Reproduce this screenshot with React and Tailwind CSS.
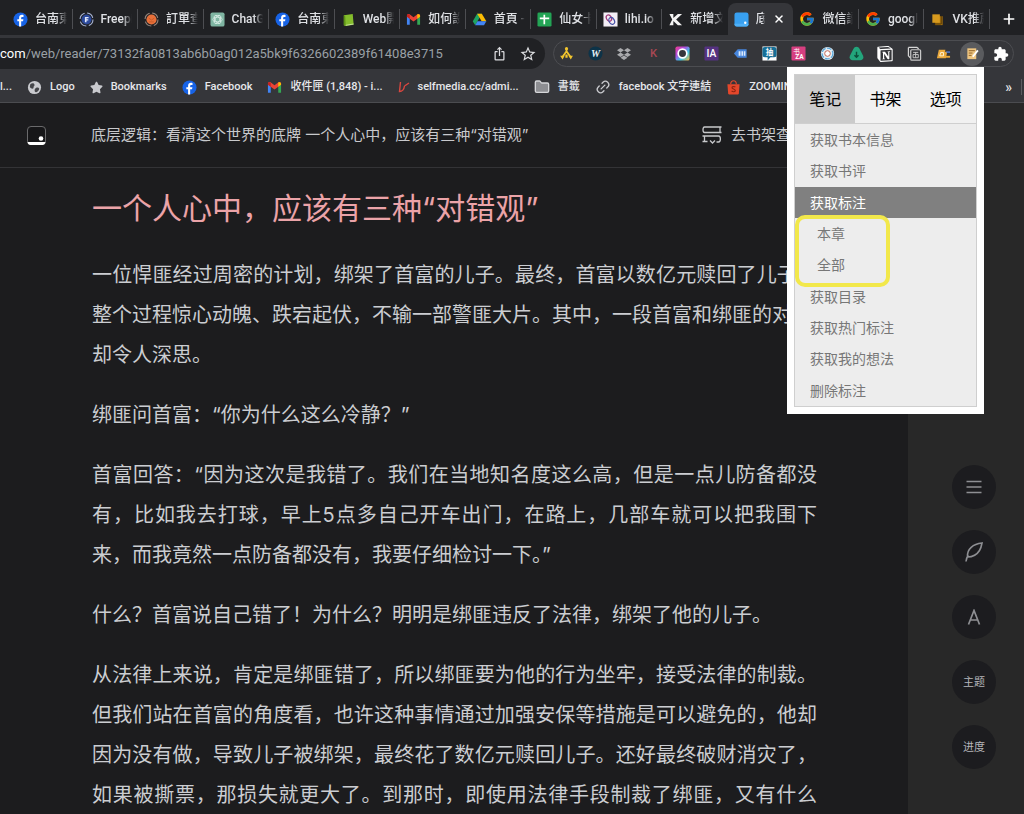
import React from "react";
import { FcGoogle } from "react-icons/fc";
import { FaDropbox, FaStar } from "react-icons/fa";
import { MdExtension, MdStarBorder, MdIosShare } from "react-icons/md";
import { SiNotion } from "react-icons/si";
import { Plus, X, Folder, Link2 } from "lucide-react";

const UI_FONT = "font-[Roboto,'Noto_Sans_CJK_TC',sans-serif]";
const READ_FONT = "font-[Inter,'Noto_Sans_CJK_SC',sans-serif]";

const Svg = ({ children, className = "size-[15px]", box = "0 0 16 16" }) => (
  <svg viewBox={box} className={`${className} shrink-0`} fill="none" aria-hidden="true">
    {children}
  </svg>
);

const Facebook = () => (
  <Svg>
    <circle cx="8" cy="8" r="7.500" fill="#1763e6" />
    <path d="M8.700 15.500V9.900h2l.4-2.200H8.700V6.400c0-.7.4-1.200 1.300-1.200h1.200V3.200c-.4-.1-1-.2-1.600-.2-1.900 0-3.100 1.100-3.100 3.100v1.600H4.600v2.200h1.900v5.600z" fill="#fff" />
  </Svg>
);
const Ring = ({ fill, ring, children }) => (
  <Svg>
    <circle cx="8" cy="8" r="5.400" fill={fill} />
    <circle cx="8" cy="8" r="6.900" stroke={ring} strokeWidth="1.100" strokeDasharray="8 2.800" />
    {children}
  </Svg>
);
const Freepik = () => (
  <Ring fill="#2c4a9c" ring="#aebbdc">
    <path d="M6.300 11V5.200h3.900v1.500H8v1h1.900v1.400H8V11z" fill="#dfe6fa" />
  </Ring>
);
const Orders = () => (
  <Ring fill="#e8703a" ring="#9c8a80">
    <path d="M5 6.500l3 2 3-2M5.500 10.500h5" stroke="#c85a28" />
  </Ring>
);
const ChatGPT = () => (
  <Svg>
    <rect x=".5" y=".5" width="15" height="15" rx="2" fill="#7fb5a2" />
    <g stroke="#d9ede6" strokeWidth=".9">
      <ellipse cx="8" cy="8" rx="5" ry="2.500" />
      <ellipse cx="8" cy="8" rx="5" ry="2.500" transform="rotate(60 8 8)" />
      <ellipse cx="8" cy="8" rx="5" ry="2.500" transform="rotate(120 8 8)" />
    </g>
  </Svg>
);
const GreenBook = () => (
  <Svg>
    <path d="M3 3.500L12.500 2l1 11.500L5 15l-2-1z" fill="#84bd2c" />
    <path d="M3 3.500l1.500 1L5 15l-2-1z" fill="#5d9116" />
    <path d="M5 14.200l8.500-1.400" stroke="#e6f3cf" strokeWidth=".7" />
  </Svg>
);
const Gmail = () => (
  <Svg>
    <path d="M1 13.500V4.500l3 2.300v6.700z" fill="#4285f4" />
    <path d="M12 13.500V6.800l3-2.300v9z" fill="#34a853" />
    <path d="M1 5V3.800C1 2.300 2.700 1.700 3.800 2.500L8 5.700l4.200-3.200C13.300 1.700 15 2.300 15 3.800V5L8 10.200z" fill="#ea4335" />
    <path d="M12 7.200V2.700c1.500-1 3 0 3 1.200V5z" fill="#fbbc04" />
    <path d="M1 3.900c0-1.200 1.500-2.200 3-1.200v4.500L1 5z" fill="#c5221f" />
  </Svg>
);
const Drive = () => (
  <Svg>
    <path d="M5.500 1.800h5L8 6.100 3.400 14 .8 9.800z" fill="#1ea362" />
    <path d="M5.500 1.800h5l4.800 8H10.300z" fill="#fbbc04" />
    <path d="M5.800 9.800h9.500L12.800 14H3.400z" fill="#4285f4" />
  </Svg>
);
const Sheets = () => (
  <Svg>
    <rect x=".5" y=".5" width="15" height="15" rx="1.500" fill="#23a455" />
    <path d="M3 6.700h10M7.800 3v10" stroke="#fff" strokeWidth="1.800" />
  </Svg>
);
const Lihi = () => (
  <Svg>
    <rect x=".5" y=".5" width="15" height="15" fill="#f3eef6" />
    <ellipse cx="6.300" cy="6.500" rx="2.600" ry="3.600" transform="rotate(-30 6.300 6.500)" stroke="#a03a78" strokeWidth="1.300" />
    <ellipse cx="9.300" cy="9.500" rx="2.800" ry="3.800" transform="rotate(-30 9.300 9.500)" stroke="#4652a8" strokeWidth="1.300" />
  </Svg>
);
const KShape = () => (
  <Svg>
    <path d="M1.500 2h4.200v4.500L10.500 2H15L8.700 8l6.300 6h-4.500L5.700 9.500V14H1.500l3-6z" fill="#f4f4f4" />
  </Svg>
);
const WeRead = () => (
  <Svg>
    <rect x=".5" y=".5" width="15" height="15" rx="2.500" fill="#38a0f0" />
    <path d="M.5 12.500h15v.5a2.500 2.500 0 0 1-2.500 2.500H3A2.500 2.500 0 0 1 .5 13z" fill="#4fb0f6" />
    <circle cx="12" cy="11.500" r="1.300" fill="#fff" />
  </Svg>
);
const Stack = () => (
  <Svg>
    <path d="M5.500 4.500h8v9.500h-8z" fill="#a36f0c" />
    <path d="M2.500 2.500h8v9h-8z" fill="#d79a1e" />
    <path d="M4 12.800h8V4" stroke="#402c05" strokeWidth=".8" />
  </Svg>
);
const Google = () => <FcGoogle className="size-4 shrink-0" />;

const TABS = [
  { title: "台南東區", Icon: Facebook },
  { title: "Freepik", Icon: Freepik },
  { title: "訂單查詢", Icon: Orders },
  { title: "ChatGPT", Icon: ChatGPT },
  { title: "台南東區", Icon: Facebook },
  { title: "Web開發", Icon: GreenBook },
  { title: "如何設定", Icon: Gmail },
  { title: "首頁 - 雲端", Icon: Drive },
  { title: "仙女卡片", Icon: Sheets },
  { title: "lihi.io", Icon: Lihi },
  { title: "新增文章", Icon: KShape },
  { title: "底层逻辑", Icon: WeRead, active: true },
  { title: "微信讀書", Icon: Google },
  { title: "google", Icon: Google },
  { title: "VK推薦", Icon: Stack },
];

function TabStrip() {
  return (
    <div className="flex h-[35px] shrink-0 items-end bg-[#202124] pl-[7px]">
      <div role="tablist" className="grid min-w-0 flex-1 auto-cols-fr grid-flow-col">
        {TABS.map(({ title, Icon, active }, i) => (
          <div
            key={i}
            className={
              active
                ? "flex h-8 min-w-0 items-center gap-2 rounded-t-lg bg-[#35363a] pl-[6px] pr-2"
                : "flex h-8 min-w-0 items-center"
            }
          >
            <button
              type="button"
              role="tab"
              aria-selected={!!active}
              className={
                active
                  ? "flex min-w-0 flex-1 items-center gap-[7px]"
                  : "flex h-5 min-w-0 flex-1 items-center gap-[7px] pl-[6px] pr-[5px]"
              }
            >
              <Icon />
              <span className="min-w-0 flex-1 overflow-hidden whitespace-nowrap text-left text-xs font-medium text-[#dfe1e5] [mask-image:linear-gradient(to_right,#000_70%,transparent)]">
                {title}
              </span>
            </button>
            {active ? (
              <button type="button" aria-label="關閉分頁" className="text-white">
                <X className="size-3" strokeWidth={3} />
              </button>
            ) : (
              <span className={i === 10 ? "" : "h-5 w-px bg-[#4d4e52]"} />
            )}
          </div>
        ))}
      </div>
      <button type="button" aria-label="新增分頁" className="grid h-8 w-[34px] place-items-center pl-1 text-white">
        <Plus className="size-4" strokeWidth={2.5} />
      </button>
    </div>
  );
}

const Tile = ({ bg, color = "#fff", children, size = 9 }) => (
  <Svg>
    <rect x=".5" y=".5" width="15" height="15" rx="1" fill={bg} />
    <text x="8" y="12" fontSize={size} fill={color} textAnchor="middle" fontWeight="500" fontFamily="Roboto, Noto Sans CJK TC">
      {children}
    </text>
  </Svg>
);

const EXTENSIONS = [
  ["分流", <Svg><path d="M8 3v3.500M8 5.500L3.800 11.500M8 5.500l4.200 6" stroke="#f2c52e" strokeWidth="1.900" /><circle cx="8" cy="2.800" r="1.700" fill="#f2c52e" /><path d="M1.200 10.500h4.800l-2.200 4zM10 10.500h4.800l-2.200 4zM6.800 9h2.400v3.500H6.800z" fill="#f2c52e" /></Svg>],
  ["Wordtune", <Svg><circle cx="8" cy="8" r="7.500" fill="#0d3348" /><text x="8" y="12" fontSize="11" fontStyle="italic" fontWeight="700" textAnchor="middle" fill="#e8f1f5" fontFamily="Liberation Serif">W</text></Svg>],
  ["Dropbox", <FaDropbox className="size-[14px] text-[#a9aaad]" />],
  ["Keywords", <Svg><text x="8" y="12" fontSize="12" fontWeight="500" textAnchor="middle" fill="#a84854" fontFamily="Roboto">K</text></Svg>],
  ["Screen", <Svg><defs><linearGradient id="cam" x1="0" y1="0" x2="1" y2="1"><stop stopColor="#f03a8c" /><stop offset=".35" stopColor="#b04be0" /><stop offset=".65" stopColor="#39c7e8" /><stop offset="1" stopColor="#f5b53c" /></linearGradient></defs><rect x=".5" y=".5" width="15" height="15" rx="2" fill="url(#cam)" /><circle cx="8" cy="8" r="4.600" stroke="#fff" strokeWidth="1.800" fill="#34353c" /></Svg>],
  ["IA", <Tile bg="#553280" size={11}>IA</Tile>],
  ["Reader", <Svg><path d="M1 8l4-4.500h9.500v9H5z" fill="#4786dc" /><path d="M6 5.500h2v5H6zM9 5.500h1.800v5H9zM11.600 5.500h1.600v5h-1.600z" fill="#dceafc" /></Svg>],
  ["抽獎", <Svg><rect x=".5" y=".5" width="15" height="15" fill="#fff" /><path d="M3 1h10a2.500 2.500 0 0 1 2.500 2.500v6A2.500 2.500 0 0 1 13 12H9l-3 3.500V12H3A2.500 2.500 0 0 1 .5 9.500v-6A2.500 2.500 0 0 1 3 1z" fill="#176f97" /><text x="8" y="9.800" fontSize="8" textAnchor="middle" fill="#fff" fontWeight="700" fontFamily="Noto Sans CJK TC">抽</text></Svg>],
  ["翻譯", <Svg><rect x=".5" y=".5" width="15" height="15" rx="1" fill="#d73f80" /><text x="6" y="8" fontSize="7" textAnchor="middle" fill="#fff" fontFamily="Noto Sans CJK TC">书</text><text x="9" y="14" fontSize="7" textAnchor="middle" fill="#fff" fontWeight="700" fontFamily="Roboto">ZA</text></Svg>],
  ["Sync", <Svg><circle cx="8" cy="8" r="7" fill="#e6eef3" /><circle cx="8" cy="8" r="5.800" stroke="#5aa7da" strokeWidth="1.400" strokeDasharray="5 1.500" /><circle cx="8" cy="8" r="3" stroke="#c1604c" fill="#fff" /></Svg>],
  ["Download", <Svg><path d="M8 .8c1.600 0 2.500.8 3.200 2.100l3.700 7.200c1.200 2.600-.2 5-2.800 5H3.900c-2.600 0-4-2.400-2.800-5l3.700-7.200C5.500 1.600 6.400.8 8 .8z" fill="#23a57c" /><path d="M8 6v6M5.800 9.800L8 12l2.200-2.200" stroke="#0d4f3b" strokeWidth="1.500" /></Svg>],
  ["Notion", <SiNotion className="size-4 text-white" />],
  ["Notion Clipper", <Svg><path d="M1.500 1.500h9l2 1.500M1.500 1.500v9l2 2" stroke="#d6d6d6" strokeWidth="1.300" /><rect x="4" y="4" width="10.500" height="11" rx="1" stroke="#c8c8c8" strokeWidth="1.300" /><path d="M6.500 6.800h5.500M6.500 9h5.500v3.500H6.500zM9.200 6.500v6" stroke="#c8c8c8" /></Svg>],
  ["Folder", <Svg><path d="M3 4h7l-.5 2h2.500L10.500 13H1z" fill="#eba93c" /><path d="M5 7h3v3.500H4z" stroke="#fff3d8" /><path d="M11 6.500h4" stroke="#4f7bd9" strokeWidth="1.500" /><path d="M10.500 11.500H15" stroke="#eba93c" strokeWidth="2" /></Svg>],
  ["微信读书笔记", <Svg><path d="M2.500 2.500h9.500V14H2.500z" fill="#efc681" /><path d="M4 5h6.500M4 7.500h4M4 10h3" stroke="#8d5f24" /><path d="M7.500 11L13 4l1.500 1.200L9 12z" fill="#fff" /></Svg>],
  ["擴充功能", <MdExtension className="size-4 text-white" />],
];

function AddressBar() {
  return (
    <div className="flex h-[37px] shrink-0 items-center gap-2 bg-[#35363a] pr-[10px]">
      <form className="flex h-[31px] min-w-0 flex-1 items-center rounded-r-full bg-[#202124] pr-[8px] text-[13px]">
        <label htmlFor="address" className="text-white">com</label>
        <input
          id="address"
          readOnly
          value="/web/reader/73132fa0813ab6b0ag012a5bk9f6326602389f61408e3715"
          className="min-w-0 flex-1 bg-transparent text-[#9aa0a6] outline-none"
        />
        <div className="flex items-center gap-3 text-[#dcdde0]">
          <button type="button" aria-label="分享"><MdIosShare className="size-[15px]" /></button>
          <button type="button" aria-label="加入書籤"><MdStarBorder className="size-[18px]" /></button>
        </div>
      </form>
      <div className="flex h-[27px] w-[461px] shrink-0 items-center justify-between rounded-full border border-[#4c4d51]">
        {EXTENSIONS.map(([name, icon], i) => (
          <button
            key={name}
            type="button"
            aria-label={name}
            className={i === 14 ? "grid size-6 place-items-center rounded-full bg-[#5a5b5e]" : "grid size-6 place-items-center"}
          >
            {icon}
          </button>
        ))}
      </div>
    </div>
  );
}

const BOOKMARKS = [
  ["Logo", <Svg><circle cx="8" cy="8" r="7" fill="#c9cace" /><path d="M3.500 4.500c2-1.500 4-1 4.500.5s-1.500 1.500-1 3-2.500 2-4-.5zM9.500 8.500c2-1 3.500 0 3.500 1s-2 3.500-3.500 3.500-2-3.500 0-4.500z" fill="#45464a" /></Svg>],
  ["Bookmarks", <FaStar className="size-[13px] text-[#c9cace]" />],
  ["Facebook", <Facebook />],
  ["收件匣 (1,848) - i...", <Gmail />],
  ["selfmedia.cc/admi...", <Svg className="h-4 w-3" box="0 0 12 16"><path d="M2.500 3L1.500 12.500c2.500 0 4.500-2 5-5.500M6.500 7l4.500-3" stroke="#d9473f" strokeWidth="1.400" /></Svg>],
  ["書籤", <Folder className="size-4 fill-[#8d8e92] text-[#d5d6d9]" />],
  ["facebook 文字連結", <Link2 className="size-4 -rotate-45 text-[#c9cace]" />],
  ["ZOOMIN", <Svg><path d="M1.500 4.500h13l-.8 10c0 .6-.5 1-1 1H3.300c-.5 0-1-.4-1-1z" fill="#e4472b" /><path d="M5 4.500C5 2 6.300.8 8 .8S11 2 11 4.500" stroke="#e4472b" strokeWidth="1.200" /><path d="M10 7.500c-1.500-1-3.600-.5-3.600.8 0 1.500 3.500 1.200 3.500 2.900 0 1.500-2.400 1.800-3.900.6" stroke="#8e2410" strokeWidth="1.200" /></Svg>],
];

function BookmarkBar() {
  return (
    <nav className="flex h-[31px] shrink-0 items-center border-b border-[#4b4c50] bg-[#35363a] text-[11px] font-medium text-[#e6e7ea]">
      <div className="flex min-w-0 flex-1 items-center gap-[15px] overflow-hidden whitespace-nowrap">
        <a href="#more">l...</a>
        {BOOKMARKS.map(([name, icon]) => (
          <a key={name} href="#bookmark" className="flex items-center gap-2">
            {icon}
            {name}
          </a>
        ))}
      </div>
      <button type="button" aria-label="更多書籤" className="px-[9px] text-sm">»</button>
      <span className="mr-0.5 h-4 w-px bg-[#5b5c60]" />
    </nav>
  );
}

const PARAGRAPHS = [
  ["一位悍匪经过周密的计划，绑架了首富的儿子。最终，首富以数亿元赎回了儿子，整个过程惊心动魄、跌宕起伏，不输一部警匪大片。其中，一段首富和绑匪的对话", "却令人深思。"],
  ["绑匪问首富：“你为什么这么冷静？”"],
  ["首富回答：“因为这次是我错了。我们在当地知名度这么高，但是一点儿防备都没有，比如我去打球，早上5点多自己开车出门，在路上，几部车就可以把我围下来，而我竟然一点防备都没有，我要仔细检讨一下。”"],
  ["什么？首富说自己错了！为什么？明明是绑匪违反了法律，绑架了他的儿子。"],
  ["从法律上来说，肯定是绑匪错了，所以绑匪要为他的行为坐牢，接受法律的制裁。但我们站在首富的角度看，也许这种事情通过加强安保等措施是可以避免的，他却因为没有做，导致儿子被绑架，最终花了数亿元赎回儿子。还好最终破财消灾了，如果被撕票，那损失就更大了。到那时，即使用法律手段制裁了绑匪，又有什么"],
];

function Reader() {
  return (
    <main className="min-w-0 flex-1 bg-[#1c1c1e]">
      <header className="flex h-[65px] items-center border-b border-[#333336] pl-[27px] text-[15px] text-[#c8c9cc]">
        <a href="#home" aria-label="微信读书" className="mr-[45px]">
          <Svg className="size-[19px]" box="0 0 19 19">
            <rect x=".5" y=".5" width="18" height="18" rx="3.500" fill="#161618" stroke="#6a6a6c" />
            <path d="M.5 16h18c-.2 2-1.500 3-3 3h-12c-1.500 0-2.800-1-3-3z" fill="#fff" />
            <circle cx="14" cy="12.500" r="2.300" fill="#fff" />
          </Svg>
        </a>
        <h2 className="flex-1 whitespace-nowrap">底层逻辑：看清这个世界的底牌 一个人心中，应该有三种“对错观”</h2>
        <a href="#shelf" className="mr-[102px] flex items-center gap-2 whitespace-nowrap">
          <Svg className="size-[22px]" box="0 0 22 22">
            <path d="M20.500 3H3.500C1.500 3 1.500 8.500 3.500 8.500h17M19 3v5.500M1.500 12h16c2.500 0 2.500 6 0 6h-2M3.500 12v5.500M1.500 17.500h5M9 16.500l2.500 2.500 2.500-2.500" stroke="#c8c9cc" strokeWidth="1.300" />
          </Svg>
          去书架查看
        </a>
      </header>
      <article className="max-w-[817px] pl-[92px] text-xl leading-10 text-[#cbcdd1]">
        <h1 className="pb-[27px] pt-5 text-3xl leading-10 text-[#eba3a8]">一个人心中，应该有三种“对错观”</h1>
        <div className="flex flex-col gap-5 text-justify">
          {PARAGRAPHS.map((lines, i) => (
            <p key={i} className={i === 4 ? "[text-align-last:justify]" : ""}>
              {lines.map((line, j) => (
                <React.Fragment key={j}>
                  {j > 0 && <br />}
                  {line}
                </React.Fragment>
              ))}
            </p>
          ))}
        </div>
      </article>
    </main>
  );
}

const TOOLS = [
  ["目录", <Svg className="size-4"><path d="M.5 2.500h15M.5 8h15M.5 13.500h15" stroke="#8e8f93" strokeWidth="1.500" /></Svg>],
  ["笔记", <Svg className="size-5" box="0 0 20 20"><path d="M2 19.500c.3-2.500 1-4.500 2.200-6.500M3.500 14.500C3 7 9 2 18 1c-.5 3-1 5-2.500 7.500C13 12.500 9 15 3.500 15z" stroke="#8e8f93" strokeWidth="1.600" /></Svg>],
  ["字体", <Svg className="size-4"><path d="M2.500 15.500L8 1.500l5.500 14M4.500 11h7" stroke="#8e8f93" strokeWidth="1.700" /></Svg>],
  ["主题", "主题"],
  ["进度", "进度"],
];

function SideTools() {
  return (
    <aside className="w-[116px] shrink-0 bg-[#282828] pl-11 pt-[362px]">
      <div className="flex flex-col gap-[21px]">
        {TOOLS.map(([name, content]) => (
          <button
            key={name}
            type="button"
            aria-label={name}
            className="grid size-11 place-items-center rounded-full bg-[#1c1c1f] text-[11px] text-[#b4b5b9]"
          >
            {content}
          </button>
        ))}
      </div>
    </aside>
  );
}

const MenuItem = ({ children, nested, selected }) => (
  <button
    type="button"
    className={
      selected
        ? "block w-full bg-[#808080] py-1 pl-[15px] text-left text-white"
        : nested
          ? "block w-full py-1 pl-[22px] text-left"
          : "block w-full py-1 pl-[15px] text-left"
    }
  >
    {children}
  </button>
);

function ExtensionPopup() {
  return (
    <section className="absolute right-10 top-[67px] w-[197px] bg-white p-[7px] text-sm leading-[23px] text-[#777]">
      <div className="border border-[#cfcfcf] bg-[#ededed]">
        <div role="tablist" className="flex border-b border-[#cfcfcf] bg-[#f1f1f1] text-base text-black">
          {["笔记", "书架", "选项"].map((t, i) => (
            <button
              key={t}
              type="button"
              role="tab"
              aria-selected={i === 0}
              className={i === 0 ? "h-12 flex-1 bg-[#cbcbcb]" : "h-12 flex-1"}
            >
              {t}
            </button>
          ))}
        </div>
        <div className="grid min-h-[282px] auto-rows-fr">
          <MenuItem>获取书本信息</MenuItem>
          <MenuItem>获取书评</MenuItem>
          <MenuItem selected>获取标注</MenuItem>
          <div className="relative row-span-2 grid auto-rows-fr">
            <MenuItem nested>本章</MenuItem>
            <MenuItem nested>全部</MenuItem>
            <div className="pointer-events-none absolute -top-[3px] left-0 h-[72px] w-[95px] rounded-[10px] border-4 border-[#f2e84b]" />
          </div>
          <MenuItem>获取目录</MenuItem>
          <MenuItem>获取热门标注</MenuItem>
          <MenuItem>获取我的想法</MenuItem>
          <MenuItem>删除标注</MenuItem>
        </div>
      </div>
    </section>
  );
}

export default function App() {
  return (
    <div lang="zh-CN" className={`relative flex min-h-screen flex-col overflow-hidden bg-[#1c1c1e] ${READ_FONT}`}>
      <div lang="zh-TW" className={UI_FONT}>
        <TabStrip />
        <AddressBar />
        <BookmarkBar />
      </div>
      <div className="flex flex-1">
        <Reader />
        <SideTools />
      </div>
      <ExtensionPopup />
    </div>
  );
}
